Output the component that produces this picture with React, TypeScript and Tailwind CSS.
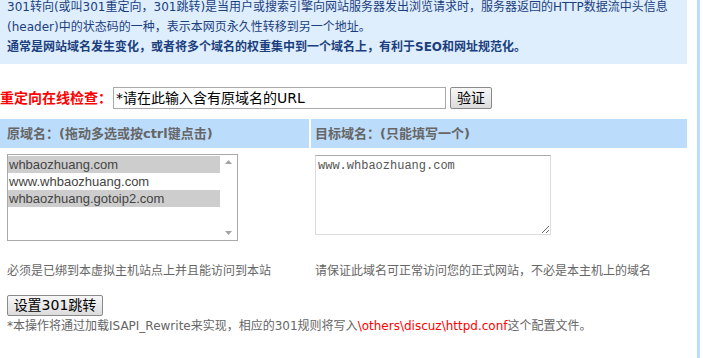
import React from 'react';

const cjk = '"DejaVu Sans", "Noto Sans CJK SC", sans-serif';

// left list of bound domains
const domains = [
  { name: 'whbaozhuang.com', picked: true },
  { name: 'www.whbaozhuang.com', picked: false },
  { name: 'whbaozhuang.gotoip2.com', picked: true },
];

const FakeButton: React.FC<{ children: React.ReactNode; className?: string }> = ({ children, className }) => (
  <button
    className={`h-[21px] border border-[#8a8a8a] rounded-[2px] bg-gradient-to-b from-[#f7f7f7] to-[#dcdcdc] text-[14px] leading-[19px] text-black ${className ?? ''}`}
    style={{ fontFamily: cjk }}
  >
    {children}
  </button>
);

export default function App() {
  return (
    <div className="w-[703px] h-[358px] overflow-hidden bg-white" style={{ fontFamily: cjk }}>
      <div className="w-[700px] h-full border-r-[3px] border-[#bcdcfb]">
        <div className="w-[687px]">
          {/* intro */}
          <div className="bg-[#dfeefd] px-[7px] h-[64px] overflow-hidden">
            <div className="-mt-[3px] text-[12px] leading-[20px] text-[#1b3f7e]">
              <p className="whitespace-nowrap">
                301转向(或叫301重定向，301跳转)是当用户或搜索引擎向网站服务器发出浏览请求时，服务器返回的HTTP数据流中头信息
              </p>
              <p className="whitespace-nowrap">(header)中的状态码的一种，表示本网页永久性转移到另一个地址。</p>
              <p className="whitespace-nowrap font-bold">
                通常是网站域名发生变化，或者将多个域名的权重集中到一个域名上，有利于SEO和网址规范化。
              </p>
            </div>
          </div>

          {/* online check */}
          <div className="flex items-center mt-[23px] h-[22px]">
            <span className="text-[14px] text-[#ff0000] font-bold w-[113px] whitespace-nowrap">重定向在线检查：</span>
            <div className="w-[333px] h-[22px] border border-[#a9a9a9] px-[2px] text-[14px] leading-[20px] text-black whitespace-nowrap overflow-hidden">
              *请在此输入含有原域名的URL
            </div>
            <FakeButton className="ml-[4px] w-[42px] h-[22px]">验证</FakeButton>
          </div>

          {/* table */}
          <div className="mt-[10px] flex h-[29px] text-[13px] font-bold text-[#666666] leading-[29px]">
            <div className="w-[309px] bg-[#bcdcfb] px-[7px] whitespace-nowrap">原域名：(拖动多选或按ctrl键点击)</div>
            <div className="w-[2px]" />
            <div className="flex-1 bg-[#bcdcfb] px-[4px] whitespace-nowrap">目标域名：(只能填写一个)</div>
          </div>

          <div className="flex mt-[6px]">
            <div className="w-[308px] pl-[7px]">
              <div className="w-[231px] h-[87px] border border-[#a9a9a9] flex">
                <div className="flex-1 pt-[1px]">
                  {domains.map((d) => (
                    <div
                      key={d.name}
                      className={`h-[17px] pl-[1px] text-[13px] leading-[17px] text-[#444444] ${d.picked ? 'bg-[#cdcdcd]' : ''}`}
                      style={{ fontFamily: '"Liberation Sans", Arial, sans-serif' }}
                    >
                      {d.name}
                    </div>
                  ))}
                </div>
                <div className="w-[17px] flex flex-col justify-between items-center py-[5px]">
                  <svg width="7" height="4" viewBox="0 0 7 4">
                    <path d="M0 4 L3.5 0 L7 4 Z" fill="#a3a3a3" />
                  </svg>
                  <svg width="7" height="4" viewBox="0 0 7 4">
                    <path d="M0 0 L3.5 4 L7 0 Z" fill="#a3a3a3" />
                  </svg>
                </div>
              </div>
            </div>
            <div className="pl-[7px] pt-[1px]">
              <textarea
                readOnly
                defaultValue="www.whbaozhuang.com"
                className="block w-[236px] h-[80px] border border-[#dcdcdc] border-t-[#a9a9a9] px-[2px] py-[3px] text-[12px] leading-[14px] text-[#555555] outline-none resize"
                style={{ fontFamily: '"Liberation Mono", "Courier New", monospace' }}
              />
            </div>
          </div>

          <div className="flex mt-[21px] text-[12px] leading-[18px] text-[#666666]">
            <div className="w-[308px] pl-[7px] whitespace-nowrap">必须是已绑到本虚拟主机站点上并且能访问到本站</div>
            <div className="pl-[7px] whitespace-nowrap">请保证此域名可正常访问您的正式网站，不必是本主机上的域名</div>
          </div>

          <div className="mt-[13px] pl-[7px]">
            <FakeButton className="w-[96px]">设置301跳转</FakeButton>
          </div>
          <p className="pl-[7px] text-[12px] leading-[18px] text-[#666666] whitespace-nowrap">
            *本操作将通过加载ISAPI_Rewrite来实现，相应的301规则将写入
            <span className="text-[#ff0000]">\others\discuz\httpd.conf</span>这个配置文件。
          </p>
        </div>
      </div>
    </div>
  );
}
